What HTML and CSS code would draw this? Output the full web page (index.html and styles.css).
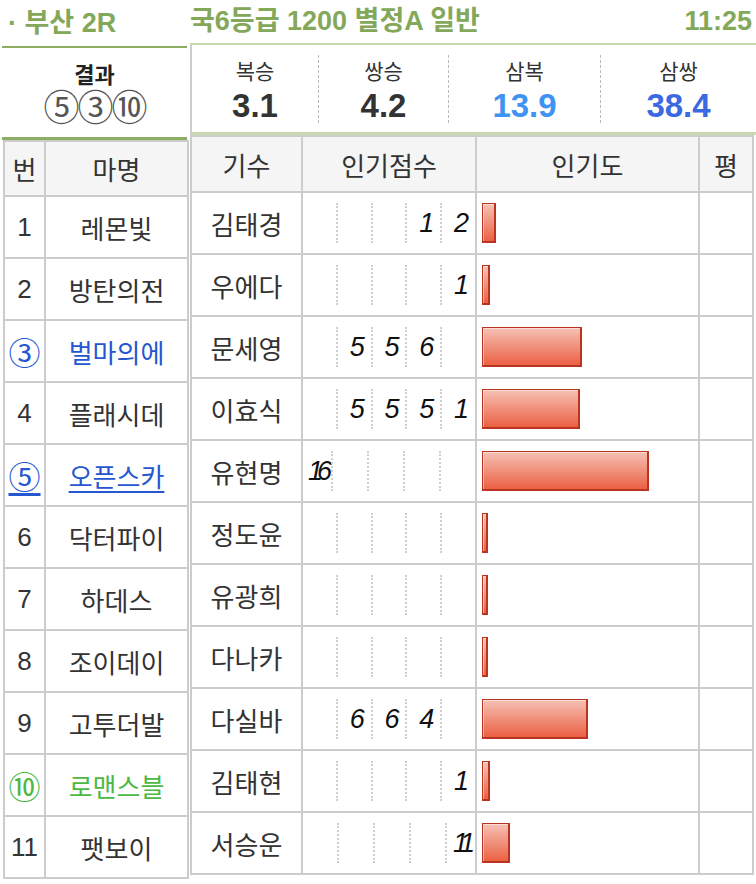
FILE: index.html
```html
<!DOCTYPE html>
<html lang="ko">
<head>
<meta charset="utf-8">
<title>부산 2R</title>
<link rel="stylesheet" href="styles.css">
</head>
<body>
<div class="page">
  <header class="top">
    <div class="venue">· 부산 2R</div>
    <div class="race"><span>국6등급 1200 별정A 일반</span><span>11:25</span></div>
  </header>
  <div class="main">
    <div class="left">
      <div class="result">
        <div class="result-title">결과</div>
        <div class="result-nums">⑤③⑩</div>
      </div>
      <div class="htable">
        <div class="hrow head"><div class="c-num">번</div><div class="c-name">마명</div></div>
        <div class="hrow"><div class="c-num">1</div><div class="c-name">레몬빛</div></div>
        <div class="hrow"><div class="c-num">2</div><div class="c-name">방탄의전</div></div>
        <div class="hrow blue"><div class="c-num circ">③</div><div class="c-name">벌마의에</div></div>
        <div class="hrow"><div class="c-num">4</div><div class="c-name">플래시데</div></div>
        <div class="hrow blue link"><div class="c-num circ"><span>⑤</span></div><div class="c-name"><span>오픈스카</span></div></div>
        <div class="hrow"><div class="c-num">6</div><div class="c-name">닥터파이</div></div>
        <div class="hrow"><div class="c-num">7</div><div class="c-name">하데스</div></div>
        <div class="hrow"><div class="c-num">8</div><div class="c-name">조이데이</div></div>
        <div class="hrow"><div class="c-num">9</div><div class="c-name">고투더발</div></div>
        <div class="hrow green"><div class="c-num circ">⑩</div><div class="c-name">로맨스블</div></div>
        <div class="hrow"><div class="c-num">11</div><div class="c-name">팻보이</div></div>
      </div>
    </div>
    <div class="right">
      <div class="odds">
        <div class="odd o1"><div class="olabel">복승</div><div class="oval">3.1</div></div>
        <div class="odd o2"><div class="olabel">쌍승</div><div class="oval">4.2</div></div>
        <div class="odd o3"><div class="olabel">삼복</div><div class="oval lightblue">13.9</div></div>
        <div class="odd o4"><div class="olabel">삼쌍</div><div class="oval darkblue">38.4</div></div>
      </div>
      <div class="jtable">
        <div class="jrow head"><div class="c-jock">기수</div><div class="c-score">인기점수</div><div class="c-pop">인기도</div><div class="c-eval">평</div></div>
        <div class="jrow"><div class="c-jock">김태경</div><div class="c-score"><span></span><span></span><span></span><span>1</span><span>2</span></div><div class="c-pop"><div class="bar" style="width:14px"></div></div><div class="c-eval"></div></div>
        <div class="jrow"><div class="c-jock">우에다</div><div class="c-score"><span></span><span></span><span></span><span></span><span>1</span></div><div class="c-pop"><div class="bar" style="width:8px"></div></div><div class="c-eval"></div></div>
        <div class="jrow"><div class="c-jock">문세영</div><div class="c-score"><span></span><span>5</span><span>5</span><span>6</span><span></span></div><div class="c-pop"><div class="bar" style="width:100px"></div></div><div class="c-eval"></div></div>
        <div class="jrow"><div class="c-jock">이효식</div><div class="c-score"><span></span><span>5</span><span>5</span><span>5</span><span>1</span></div><div class="c-pop"><div class="bar" style="width:98px"></div></div><div class="c-eval"></div></div>
        <div class="jrow"><div class="c-jock">유현명</div><div class="c-score"><span class="two">16</span><span></span><span></span><span></span><span></span></div><div class="c-pop"><div class="bar" style="width:167px"></div></div><div class="c-eval"></div></div>
        <div class="jrow"><div class="c-jock">정도윤</div><div class="c-score"><span></span><span></span><span></span><span></span><span></span></div><div class="c-pop"><div class="bar" style="width:6px"></div></div><div class="c-eval"></div></div>
        <div class="jrow"><div class="c-jock">유광희</div><div class="c-score"><span></span><span></span><span></span><span></span><span></span></div><div class="c-pop"><div class="bar" style="width:6px"></div></div><div class="c-eval"></div></div>
        <div class="jrow"><div class="c-jock">다나카</div><div class="c-score"><span></span><span></span><span></span><span></span><span></span></div><div class="c-pop"><div class="bar" style="width:6px"></div></div><div class="c-eval"></div></div>
        <div class="jrow"><div class="c-jock">다실바</div><div class="c-score"><span></span><span>6</span><span>6</span><span>4</span><span></span></div><div class="c-pop"><div class="bar" style="width:106px"></div></div><div class="c-eval"></div></div>
        <div class="jrow"><div class="c-jock">김태현</div><div class="c-score"><span></span><span></span><span></span><span></span><span>1</span></div><div class="c-pop"><div class="bar" style="width:8px"></div></div><div class="c-eval"></div></div>
        <div class="jrow"><div class="c-jock">서승운</div><div class="c-score"><span></span><span></span><span></span><span></span><span class="two">11</span></div><div class="c-pop"><div class="bar" style="width:28px"></div></div><div class="c-eval"></div></div>
      </div>
    </div>
  </div>
</div>
</body>
</html>
```

FILE: styles.css
```css
* { box-sizing: border-box; }
html, body { margin: 0; padding: 0; background: #fff; }
body {
  font-family: "Liberation Sans", "Noto Sans CJK KR", sans-serif;
  color: #333;
  width: 756px;
}
.page { width: 756px; }

.top { display: flex; height: 45px; }
.venue {
  width: 190px;
  padding-left: 8px;
  font-size: 27px;
  font-weight: bold;
  color: #84a85a;
  line-height: 46px;
}
.race {
  flex: 1;
  display: flex;
  justify-content: space-between;
  padding-right: 4px;
  font-size: 27px;
  font-weight: bold;
  color: #84a85a;
  line-height: 43px;
  height: 45px;
  border-bottom: 2px solid #c8d9b0;
}

.main { display: flex; }
.left { width: 190px; padding-left: 3px; margin-top: 1px; }
.right { width: 566px; }

.result {
  width: 185px;
  height: 94px;
  margin-left: -1px;
  border-top: 2px solid #8dad62;
  border-bottom: 3px solid #8dad62;
  text-align: center;
}
.result-title { font-size: 22px; font-weight: bold; color: #222; margin-top: 14px; line-height: 28px; }
.result-nums { font-size: 36px; color: #555; line-height: 40px; letter-spacing: -2px; margin-top: -1px; }

.htable { width: 186px; border-left: 2px solid #ccc; border-top: 2px solid #ccc; }
.hrow { display: flex; height: 62px; border-bottom: 2px solid #ccc; font-size: 26px; }
.hrow.head { height: 55px; background: #f5f5f5; }
.hrow > div { display: flex; align-items: center; justify-content: center; border-right: 2px solid #ccc; }
.c-num { width: 41px; }
.c-name { width: 143px; }
.hrow.blue { color: #2457d0; }
.hrow.green { color: #4cb843; }
.hrow.link span { text-decoration: underline; text-underline-offset: 4px; }
.circ { font-size: 32px; }

.odds {
  display: flex;
  height: 90px;
  border-left: 2px solid #ccc;
  border-bottom: 3px solid #c8d9b0;
  padding: 10px 0 9px;
}
.odd { text-align: center; }
.o1 { width: 126px; }
.o2 { width: 130px; }
.o3 { width: 152px; }
.o4 { flex: 1; }
.o2, .o3, .o4 { border-left: 1px dashed #bbb; }
.olabel { font-size: 21px; line-height: 30px; color: #333; margin-top: 2px; }
.oval { font-size: 33px; font-weight: bold; line-height: 38px; color: #333; }
.oval.lightblue { color: #3f93f2; }
.oval.darkblue { color: #3a69e2; }

.jtable { width: 564px; border-left: 2px solid #ccc; border-top: 2px solid #ccc; }
.jrow { display: flex; height: 62px; border-bottom: 2px solid #ccc; font-size: 26px; }
.jrow.head { height: 56px; background: #f5f5f5; }
.jrow > div { display: flex; align-items: center; border-right: 2px solid #ccc; }
.c-jock { width: 111px; justify-content: center; }
.c-score { width: 174px; justify-content: center; }
.c-pop { width: 223px; padding-left: 5px; }
.c-eval { width: 54px; justify-content: center; }
.jrow.head .c-pop { justify-content: center; padding-left: 0; }

.jrow:not(.head) .c-score { padding: 0; }
.jrow:not(.head) .c-score span {
  flex: 1;
  height: 40px;
  display: flex;
  align-items: center;
  justify-content: center;
  padding-left: 6px;
  font-family: "Liberation Sans", sans-serif;
  font-style: italic;
  font-size: 27px;
  color: #111;
}
.jrow:not(.head) .c-score span + span { border-left: 2px dotted #d0d0d0; }
.jrow:not(.head) .c-score span.two { letter-spacing: -6px; padding-left: 0; }

.bar {
  height: 40px;
  border: 1px solid #b9351f;
  border-right-width: 2px;
  border-bottom-width: 2px;
  background: linear-gradient(#f5c1b4, #ec6044);
  box-shadow: inset 1px 1px 0 rgba(255,255,255,0.45);
}
```
